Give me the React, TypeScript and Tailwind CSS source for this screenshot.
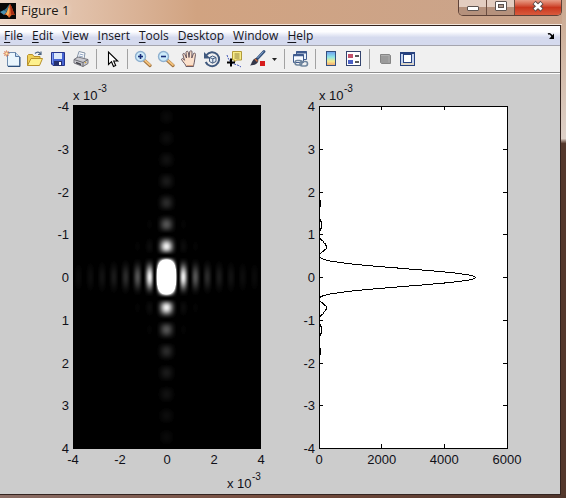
import type { ReactNode } from "react";

const MENUS = ["File", "Edit", "View", "Insert", "Tools", "Desktop", "Window", "Help"];

/* ---------- toolbar icons ---------- */

function Icon({ children }: { children: ReactNode }) {
  return (
    <svg width="18" height="18" viewBox="0 0 18 18" fill="none" aria-hidden="true">
      {children}
    </svg>
  );
}

const NewIcon = () => (
  <Icon>
    <path d="M4.5 2.5h8l4 4v9.500h-12z" fill="#e9f5fd" stroke="#6f8cae" />
    <path d="M5 16.500h12V7" stroke="#2d4f7c" />
    <path d="M12.500 2.500v4h4" fill="#c3dcf2" stroke="#5577a2" />
    <path d="M3.500 0v7M0 3.500h7M1 1l5 5M6 1L1 6" stroke="#e9a585" strokeWidth=".8" />
    <rect x="2" y="2" width="3" height="3" fill="#fff2b8" stroke="#c9552e" strokeWidth=".6" />
  </Icon>
);

const OpenIcon = () => (
  <Icon>
    <path d="M1.500 15.500v-10l1-1h4l1.500 2h6v3" fill="#f0cf55" stroke="#b8912a" />
    <path d="M1.500 15.500l3.500-7h11.500l-3 7z" fill="#fdf08c" stroke="#b8912a" />
    <path d="M9 3.500c2-2 4-2 5.500.500M15 1.500v3h-3" stroke="#4d6583" strokeWidth="1.200" />
  </Icon>
);

const SaveIcon = () => (
  <Icon>
    <path d="M2.500 2.500h13v13H4l-1.500-1.500z" fill="#4664d2" stroke="#26348c" />
    <rect x="5" y="3" width="8" height="6" fill="#dce8fa" />
    <rect x="5" y="11" width="8" height="5" fill="#26306e" />
    <rect x="10" y="12" width="2" height="3" fill="#fff" />
    <path d="M3.500 3v10" stroke="#819df0" />
  </Icon>
);

const PrintIcon = () => (
  <Icon>
    <path d="M5 8l2-6.500 6 1.500-1 6" fill="#fff" stroke="#8494a8" />
    <path d="M7.500 4l4 1M7 6l4 1" stroke="#8fa5c4" />
    <path d="M2 9.500L6 7l10 2.500v4L11 16.500 2 13z" fill="#c9c9cf" stroke="#77777f" />
    <path d="M2 9.500l9 3 5-3M11 12.500v4" stroke="#68686f" />
    <path d="M4 12.500l5 2" stroke="#44444b" strokeWidth="1.500" />
    <circle cx="13.500" cy="12.500" r=".8" fill="#d8a532" />
  </Icon>
);

const PointerIcon = () => (
  <Icon>
    <path d="M5.500 2v12.500l3-2.800 2 4.800 2.200-1-2-4.500h4z" fill="#fff" stroke="#000" strokeWidth="1.100" />
  </Icon>
);

function Magnifier({ plus }: { plus?: boolean }) {
  return (
    <Icon>
      <path d="M10.500 10.500l5.500 5" stroke="#a0713c" strokeWidth="3.200" strokeLinecap="round" />
      <path d="M11 10.500l5 4.500" stroke="#f3c27c" strokeWidth="1.800" strokeLinecap="round" />
      <circle cx="6.500" cy="6.500" r="5" fill="#cdebfa" stroke="#8fb0cf" strokeWidth="1.400" />
      <path d="M4 6.500h5" stroke="#182c78" strokeWidth="1.600" />
      {plus && <path d="M6.500 4v5" stroke="#182c78" strokeWidth="1.600" />}
    </Icon>
  );
}

const HandIcon = () => (
  <Icon>
    <path
      d="M6 16.500c0-2-2.500-3.500-4.500-7 .3-1.500 1.500-1.200 3 .8L2.800 4.500c.2-1.500 1.700-1.500 2.200 0L6.500 8 6 2.300c.5-1.500 2-1.300 2.300 0L9 7.500l.8-6c.7-1.200 2-1 2.200.3L11.800 8l1.700-4.500c1-.9 2-.3 2 1L14.500 11c-.3 3-1 3.500-1 5.500z"
      fill="#fbe0cb"
      stroke="#5a4a54"
      strokeWidth=".9"
    />
    <path d="M6.500 15.500h6.500" stroke="#d9a27e" />
  </Icon>
);

const RotateIcon = () => (
  <Icon>
    <path d="M3.500 5a7 7 0 1 1-.8 7" stroke="#40597e" strokeWidth="2" />
    <path d="M1 2v6.500h6.500z" fill="#40597e" />
    <path d="M6.500 7.500l3-1.500 3.500 1.500v4l-3.500 1.700-3-1.700z" fill="#e3ecf5" stroke="#40597e" />
    <path d="M6.500 7.500l3.300 1.300L13 7.500M9.800 9v4" stroke="#40597e" />
  </Icon>
);

const DataCursorIcon = () => (
  <Icon>
    <path d="M1 5c1 3 2 6 5 8s5 1 9 4" stroke="#4257b8" strokeDasharray="2 1" />
    <path d="M6.500 1.500h9v8.500h-5l-2 2v-2h-2z" fill="#f9ed87" stroke="#b29b3b" />
    <path d="M8.500 4h5M8.500 6h5M8.500 8h5" stroke="#8f803e" />
    <path d="M5 8.500v8M1 12.500h8" stroke="#000" strokeWidth="2" />
  </Icon>
);

const BrushIcon = () => (
  <Icon>
    <path d="M8 9l7-7.500" stroke="#35517c" strokeWidth="2.800" strokeLinecap="round" />
    <path d="M8.500 8l6-6.500" stroke="#86a9d2" />
    <path d="M7 8l2.500 2.500C9 14 5 15.500 1 15.500c2-1.500 1.500-6 6-7.500z" fill="#35384a" />
    <path d="M6 9l2.500 2.500" stroke="#c96a3b" strokeWidth="1.400" />
    <rect x="11" y="11" width="5" height="5" fill="#d71d1d" />
  </Icon>
);

const LinkIcon = () => (
  <Icon>
    <path d="M5.500 1.500h10v8h-10z" fill="#eaf2fb" stroke="#3f5b8e" />
    <path d="M5 2.500h11" stroke="#3f5b8e" strokeWidth="2" />
    <path d="M2.500 4.500h10v8h-10z" fill="#f6faff" stroke="#3f5b8e" />
    <path d="M2 5.500h11" stroke="#3f5b8e" strokeWidth="1.500" />
    <rect x="4" y="10.500" width="7" height="4.500" rx="2.200" stroke="#6f859d" strokeWidth="1.600" />
    <rect x="9" y="11.500" width="7.500" height="4.500" rx="2.200" stroke="#6f859d" strokeWidth="1.600" />
  </Icon>
);

const ColorbarIcon = () => (
  <Icon>
    <defs>
      <linearGradient id="cbar" x1="0" y1="0" x2="0" y2="1">
        <stop offset="0" stopColor="#6c9cf0" />
        <stop offset=".4" stopColor="#8ee6e6" />
        <stop offset=".7" stopColor="#f4eb8c" />
        <stop offset="1" stopColor="#f2a070" />
      </linearGradient>
    </defs>
    <rect x="4.500" y="1.500" width="9" height="14" fill="url(#cbar)" stroke="#34507f" />
  </Icon>
);

const LegendIcon = () => (
  <Icon>
    <rect x="1.500" y="1.500" width="14" height="14" fill="#fff" stroke="#34446e" />
    <rect x="3" y="4" width="5" height="4" fill="#c4526b" />
    <rect x="3" y="10" width="5" height="4" fill="#4a5fc4" />
    <path d="M10 6h4M10 12h4" stroke="#222" strokeWidth="1.400" />
  </Icon>
);

const HideToolsIcon = () => (
  <Icon>
    <path d="M4.500 4.500h9l1 1v8h-9l-1-1z" fill="#9a9a9a" stroke="#858585" />
    <path d="M5 5.500h8v7" stroke="#aeaeae" />
  </Icon>
);

const ShowToolsIcon = () => (
  <Icon>
    <rect x="1.500" y="2.500" width="14" height="13" fill="#c4d3ee" stroke="#27427f" />
    <path d="M1 3h15" stroke="#27427f" strokeWidth="2" />
    <rect x="4.500" y="4.500" width="8" height="8" fill="#fff" stroke="#27427f" />
    <path d="M2 14h13" stroke="#dcd5c6" strokeWidth="2" />
  </Icon>
);

function Tool({ label, children }: { label: string; children: ReactNode }) {
  return (
    <button type="button" aria-label={label} className="flex h-6 w-[23px] shrink-0 items-center justify-center">
      {children}
    </button>
  );
}

const Separator = () => (
  <div className="flex w-2 shrink-0 justify-center">
    <div className="h-5 w-px bg-[#a2a2a2]" />
  </div>
);

/* ---------- plots ---------- */

const HALF = 4; // axis half range, in units of 1e-3
const FIRST_ZERO = 0.5;
const PEAK = 5000;

function sinc2(u: number) {
  const t = (Math.PI * u) / FIRST_ZERO;
  return Math.abs(t) < 1e-9 ? 1 : (Math.sin(t) / t) ** 2;
}

const PLOT = { left: 33, top: 30, width: 188, height: 342 };

/* One path for each grey level, made of horizontal runs of equal pixels. */
function diffractionPaths() {
  const levels = new Map<number, string>();
  const { left, top, width, height } = PLOT;
  const grey = (x: number, y: number) => {
    const u = ((x + 1 - width / 2) / (width / 2)) * HALF;
    const v = ((y + 0.5 - height / 2) / (height / 2)) * HALF;
    return Math.min(255, Math.round(PEAK * sinc2(u) * sinc2(v)));
  };
  for (let y = 0; y < height; y++) {
    let x = 0;
    while (x < width) {
      const g = grey(x, y);
      let end = x + 1;
      while (end < width && grey(end, y) === g) end++;
      if (g > 2) {
        levels.set(g, (levels.get(g) ?? "") + `M${left + x} ${top + y}h${end - x}v1h${x - end}z`);
      }
      x = end;
    }
  }
  return [...levels.entries()];
}

function profilePoints() {
  const { left, top, width, height } = PLOT;
  const points: string[] = [];
  for (let i = 0; i <= 400; i++) {
    const v = HALF - (i / 400) * 2 * HALF;
    const x = left + 0.5 + Math.floor((PEAK * sinc2(v) * width) / 6000);
    const y = top + 0.5 + (i / 400) * height;
    points.push(`${x.toFixed(2)},${y.toFixed(2)}`);
  }
  return points.join(" ");
}

function Exponent({ x, y }: { x: number; y: number }) {
  return (
    <>
      <text x={x} y={y}>
        x 10
      </text>
      <text x={x + 25} y={y - 8} fontSize="10">
        -3
      </text>
    </>
  );
}

function Axes({
  label,
  yLabels,
  xLabels,
  xExponent,
  children,
}: {
  label: string;
  yLabels: number[];
  xLabels: number[];
  xExponent?: boolean;
  children: ReactNode;
}) {
  const { left, top, width, height } = PLOT;
  return (
    <svg
      width="246"
      height="416"
      viewBox="0 0 246 416"
      role="img"
      aria-label={label}
      className="shrink-0 font-['Liberation_Sans',Arial,sans-serif]"
      fontSize="13"
      fill="#101018"
    >
      {children}
      {yLabels.map((v, i) => (
        <text key={v} x={left - 4} y={top + 5 + (i * height) / 8} textAnchor="end">
          {v}
        </text>
      ))}
      {xLabels.map((v, i) => (
        <text key={v} x={left + (i * width) / (xLabels.length - 1)} y={top + height + 16} textAnchor="middle">
          {v}
        </text>
      ))}
      <Exponent x={left} y={top - 6} />
      {xExponent && <Exponent x={left + width - 34} y={top + height + 40} />}
    </svg>
  );
}

function DiffractionImage() {
  const { left, top, width, height } = PLOT;
  return (
    <Axes
      label="Diffraction pattern"
      yLabels={[-4, -3, -2, -1, 0, 1, 2, 3, 4]}
      xLabels={[-4, -2, 0, 2, 4]}
      xExponent
    >
      <rect x={left} y={top - 1} width={width} height={height + 2} fill="#000" />
      <g shapeRendering="crispEdges">
        {diffractionPaths().map(([g, d]) => (
          <path key={g} d={d} fill={`rgb(${g},${g},${g})`} />
        ))}
      </g>
    </Axes>
  );
}

function IntensityProfile() {
  const { left, top, width, height } = PLOT;
  const right = left + width;
  const bottom = top + height;
  let ticks = "";
  for (let i = 1; i < 8; i++) {
    const y = top + Math.round((i * height) / 8) + 0.5;
    ticks += `M${left} ${y}h4M${right + 1} ${y}h-5`;
  }
  for (let i = 1; i < 3; i++) {
    const x = left + Math.floor((i * width) / 3) + 0.5;
    ticks += `M${x} ${top}v4M${x} ${bottom + 1}v-5`;
  }
  return (
    <Axes
      label="Intensity profile"
      yLabels={[4, 3, 2, 1, 0, -1, -2, -3, -4]}
      xLabels={[0, 2000, 4000, 6000]}
    >
      <g shapeRendering="crispEdges" stroke="#000">
        <rect x={left + 0.5} y={top + 0.5} width={width} height={height} fill="#fff" />
        <path d={ticks} />
        <polyline points={profilePoints()} fill="none" />
      </g>
    </Axes>
  );
}

/* ---------- window ---------- */

function TitleBar() {
  const control = "flex h-full items-center justify-center border-[#6b4d40] bg-linear-to-b from-[#e3cdc0] from-45% to-[#b5917c] to-50%";
  return (
    <header className="flex h-6 items-start justify-between">
      <div className="flex items-start">
        <svg width="16" height="16" viewBox="0 0 16 16" className="mt-[3px]" aria-hidden="true">
          <rect width="16" height="16" fill="#080808" />
          <path d="M0 9l4-2 3 2-3 3z" fill="#4a8fae" />
          <path d="M4 7c3-1 4-5 6-6l-3 8z" fill="#397790" />
          <path d="M4 12l3-3c1-3 2-7 3-8 2 2 3 8 5 11-2-1-3-1-6 3-1-2-2-4-5-3z" fill="#e5682a" />
          <path d="M10 1c2 2 3 8 5 11-2-1-3-1-4 0z" fill="#a62c14" />
          <path d="M9 4c1 4 0 7-1 9l-2-2z" fill="#f8b45c" />
        </svg>
        <h1 className="mt-px ml-[5px] text-[13px] leading-[18px] text-[#201812] [text-shadow:0_0_6px_#fff5ed]">Figure 1</h1>
      </div>
      <div className="flex h-4 overflow-hidden rounded-b-[5px] border border-t-0 border-[#5e4238]">
        <button type="button" aria-label="Minimize" className={`${control} w-7 border-r`}>
          <svg width="12" height="16" viewBox="0 0 12 16">
            <rect x=".5" y="6.500" width="11" height="4" rx=".5" fill="#fff" stroke="#5c5350" />
          </svg>
        </button>
        <button type="button" aria-label="Maximize" className={`${control} w-7 border-r`}>
          <svg width="12" height="16" viewBox="0 0 12 16">
            <rect x=".5" y="1.500" width="11" height="9" rx=".5" fill="#fff" stroke="#5c5350" />
            <rect x="3.500" y="4.500" width="5" height="3" fill="#b39a8c" stroke="#5c5350" />
          </svg>
        </button>
        <button
          type="button"
          aria-label="Close"
          className="flex h-full w-[46px] items-center justify-center bg-linear-to-b from-[#e79c86] via-[#c9361d] via-50% to-[#d95a3c]"
        >
          <svg width="14" height="16" viewBox="0 0 14 16">
            <path d="M3 2.500l8 7.500M11 2.500L3 10" stroke="#5c4a48" strokeWidth="4.500" />
            <path d="M3.500 3l7 6.500M10.500 3l-7 6.500" stroke="#fff" strokeWidth="2.600" />
          </svg>
        </button>
      </div>
    </header>
  );
}

function MenuBar() {
  return (
    <nav className="flex h-5 items-center justify-between border-b border-[#a5a5ae] bg-linear-to-b from-[#fdfdff] from-30% to-[#d5daee] to-60% pt-px pr-[5px] pl-1">
      <div className="flex gap-[9px]">
        {MENUS.map((m) => (
          <button key={m} type="button" className="text-[12px] leading-4 text-[#15151c]">
            <span className="underline underline-offset-2">{m[0]}</span>
            {m.slice(1)}
          </button>
        ))}
      </div>
      <button type="button" aria-label="Dock figure">
        <svg width="8" height="8" viewBox="0 0 8 8">
          <path d="M1 2c2-1 3 0 4.500 3" stroke="#000" strokeWidth="1.600" fill="none" />
          <path d="M7 1.500v5.500H2z" fill="#000" />
        </svg>
      </button>
    </nav>
  );
}

function ToolBar() {
  return (
    <div role="toolbar" aria-label="Figure toolbar" className="flex h-[27px] items-center border-b border-[#8e8e8e] bg-[#f0f0f0]">
      <Tool label="New figure"><NewIcon /></Tool>
      <Tool label="Open file"><OpenIcon /></Tool>
      <Tool label="Save figure"><SaveIcon /></Tool>
      <Tool label="Print figure"><PrintIcon /></Tool>
      <Separator />
      <Tool label="Edit plot"><PointerIcon /></Tool>
      <Separator />
      <Tool label="Zoom in"><Magnifier plus /></Tool>
      <Tool label="Zoom out"><Magnifier /></Tool>
      <Tool label="Pan"><HandIcon /></Tool>
      <Tool label="Rotate 3D"><RotateIcon /></Tool>
      <Tool label="Data cursor"><DataCursorIcon /></Tool>
      <Tool label="Brush data"><BrushIcon /></Tool>
      <button type="button" aria-label="Brush options" className="flex h-6 w-[11px] items-center justify-center">
        <svg width="5" height="3" viewBox="0 0 5 3">
          <path d="M0 0h5L2.500 3z" fill="#222" />
        </svg>
      </button>
      <Separator />
      <Tool label="Link plot"><LinkIcon /></Tool>
      <Separator />
      <Tool label="Insert colorbar"><ColorbarIcon /></Tool>
      <Tool label="Insert legend"><LegendIcon /></Tool>
      <Separator />
      <Tool label="Hide plot tools"><HideToolsIcon /></Tool>
      <Tool label="Show plot tools"><ShowToolsIcon /></Tool>
    </div>
  );
}

export default function App() {
  return (
    <div className="flex min-h-screen flex-col bg-linear-to-r from-[#8b6e66] via-[#744b3c] to-[#4f352b] font-['Open_Sans','Noto_Sans',sans-serif]">
      <div className="flex flex-1 bg-linear-to-b from-[#c9a78e] from-0% via-[#ddd0c8] via-28% to-[#54382c] to-29% pr-1">
        <div className="flex min-w-0 flex-1 flex-col">
          <div className="border-b border-[#f3e6dc] bg-linear-to-r from-[#ecd5c5] via-[#d1a381] via-35% to-[#c9a48c]">
            <TitleBar />
          </div>
          <div className="mr-px flex flex-1 flex-col border-t border-r border-b border-[#33231f] bg-[#cccccc]">
            <MenuBar />
            <ToolBar />
            <main className="flex border-t border-white pt-[2px] pl-10">
              <DiffractionImage />
              <IntensityProfile />
            </main>
          </div>
        </div>
      </div>
      <div className="h-[3px]" />
    </div>
  );
}
